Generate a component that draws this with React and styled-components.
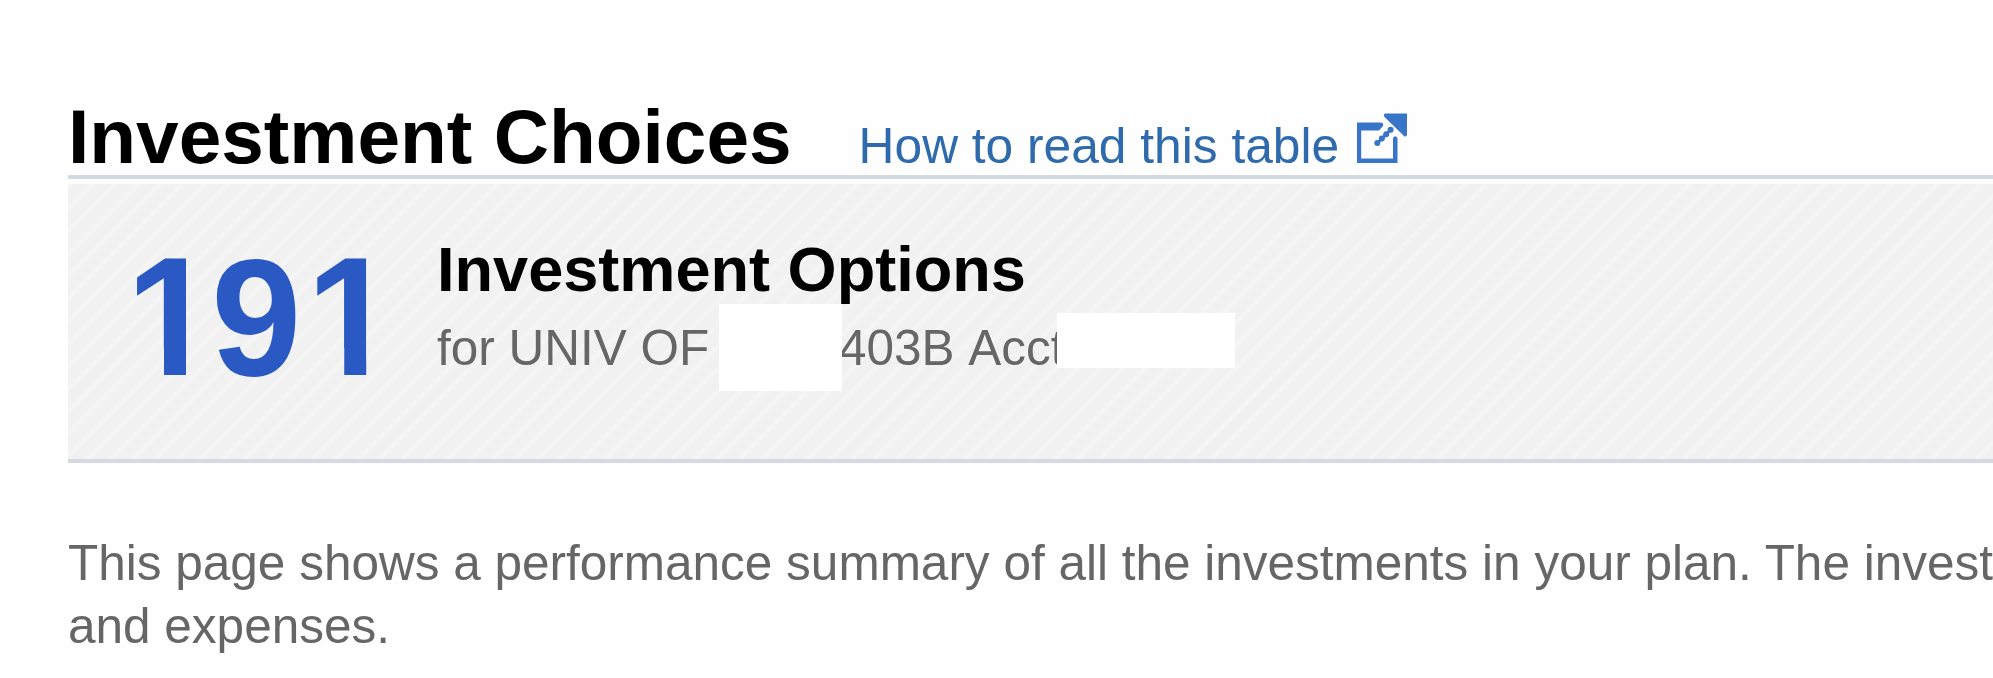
import React from "react";
import styled, { createGlobalStyle } from "styled-components";

const GlobalStyle = createGlobalStyle`
  body {
    margin: 0;
    background: #fefefe;
    overflow: hidden;
  }
`;

const Base = styled.main`
  box-sizing: border-box;
  width: 1993px;
  height: 678px;
  padding: 93px 0 0 68px;
  font-family: Arial, "Liberation Sans", sans-serif;
  font-size: 49.5px;
  color: #666666;
`;

const TopBar = styled.header`
  display: flex;
  align-items: baseline;
  height: 82px;
  border-bottom: 4px solid #d2d9e3;
`;

const Title = styled.h1`
  margin: 0;
  font-size: 76.6px;
  line-height: 87px;
  color: #000000;
  white-space: nowrap;
`;

const HelpLink = styled.a`
  display: flex;
  align-items: baseline;
  margin-left: 67px;
  font-size: 49.7px;
  color: #2f6bac;
  white-space: nowrap;
`;

const PopupIcon = styled.svg`
  width: 50px;
  height: 50px;
  margin-left: 17.7px;
`;

const Summary = styled.section`
  display: flex;
  box-sizing: border-box;
  height: 279px;
  margin-top: 5px;
  border-bottom: 4px solid #d4d9e2;
  background: repeating-linear-gradient(
    135deg,
    #f3f3f3 0,
    #f6f6f6 1.8px,
    #f1f1f1 5px,
    #f1f1f1 14.5px,
    #f3f3f3 15.9px
  );
`;

const Count = styled.div`
  display: flex;
  margin-left: 58px;
  width: 311px;
  padding-top: 45px;
  font-size: 162px;
  font-weight: bold;
  line-height: 180px;
  color: #2b59c3;
`;

/* the "1" is trimmed down to its flag and stem */
const Digit = styled.span`
  height: 180px;
  transform: ${(props) => (props.$trim ? "scaleY(1.04)" : "translateX(-4.8px) scaleY(1.03)")};
  transform-origin: 0 146px;
  clip-path: ${(props) =>
    props.$trim
      ? "polygon(0 0, 60px 0, 60px 100%, 38px 100%, 38px 120px, 0 120px)"
      : "none"};
`;

const Details = styled.div`
  padding-top: 49px;
`;

const Subtitle = styled.h2`
  margin: 0;
  font-size: 63.1px;
  line-height: 72px;
  color: #000000;
`;

const Account = styled.div`
  display: flex;
  margin-top: 13px;
  line-height: 60px;
  font-kerning: none;
  white-space: pre;
`;

const PlanName = styled.span`
  width: 282px;
`;

const PlanMask = styled.span`
  z-index: 1;
  width: 123px;
  height: 87px;
  margin: -14px -3px 0 0;
  background: #ffffff;
`;

const AccountType = styled.span`
  width: 218px;
`;

const NumberMask = styled.span`
  z-index: 1;
  width: 178px;
  height: 55px;
  margin-top: -5px;
  background: #ffffff;
`;

const Intro = styled.p`
  margin: 68px 0 0;
  line-height: 63px;
  white-space: nowrap;
`;

function NewWindow() {
  return (
    <PopupIcon viewBox="0 0 50 50" fill="#3874c8">
      <path d="M0 9.5H24Q27 10 26 13L22 17.5H4.2V45.5H36V25Q38.2 21.5 40.5 25V50H0Z" />
      <path d="M28 0.5H50V22Q48 25 46 22L27.5 4Q26 1.5 28 0.5Z" />
      <path d="M20.3 30.2L33.6 16.8" stroke="#3874c8" strokeWidth="3" />
      <circle cx="20.3" cy="30" r="3" />
      <circle cx="24.8" cy="25.6" r="3" />
      <circle cx="29.2" cy="21.2" r="3" />
      <circle cx="33.6" cy="16.8" r="3" />
    </PopupIcon>
  );
}

function App() {
  return (
    <Base>
      <GlobalStyle />
      <TopBar>
        <Title>Investment Choices</Title>
        <HelpLink>
          How to read this table
          <NewWindow />
        </HelpLink>
      </TopBar>
      <Summary>
        <Count>
          {"191".split("").map((digit, index) => (
            <Digit key={index} $trim={digit === "1"}>{digit}</Digit>
          ))}
        </Count>
        <Details>
          <Subtitle>Investment Options</Subtitle>
          <Account>
            <PlanName>for UNIV OF</PlanName>
            <PlanMask />
            <AccountType>403B Acct</AccountType>
            <NumberMask />
          </Account>
        </Details>
      </Summary>
      <Intro>
        This page shows a performance summary of all the investments in your plan. The invest
        <br />
        and expenses.
      </Intro>
    </Base>
  );
}

export default App;
